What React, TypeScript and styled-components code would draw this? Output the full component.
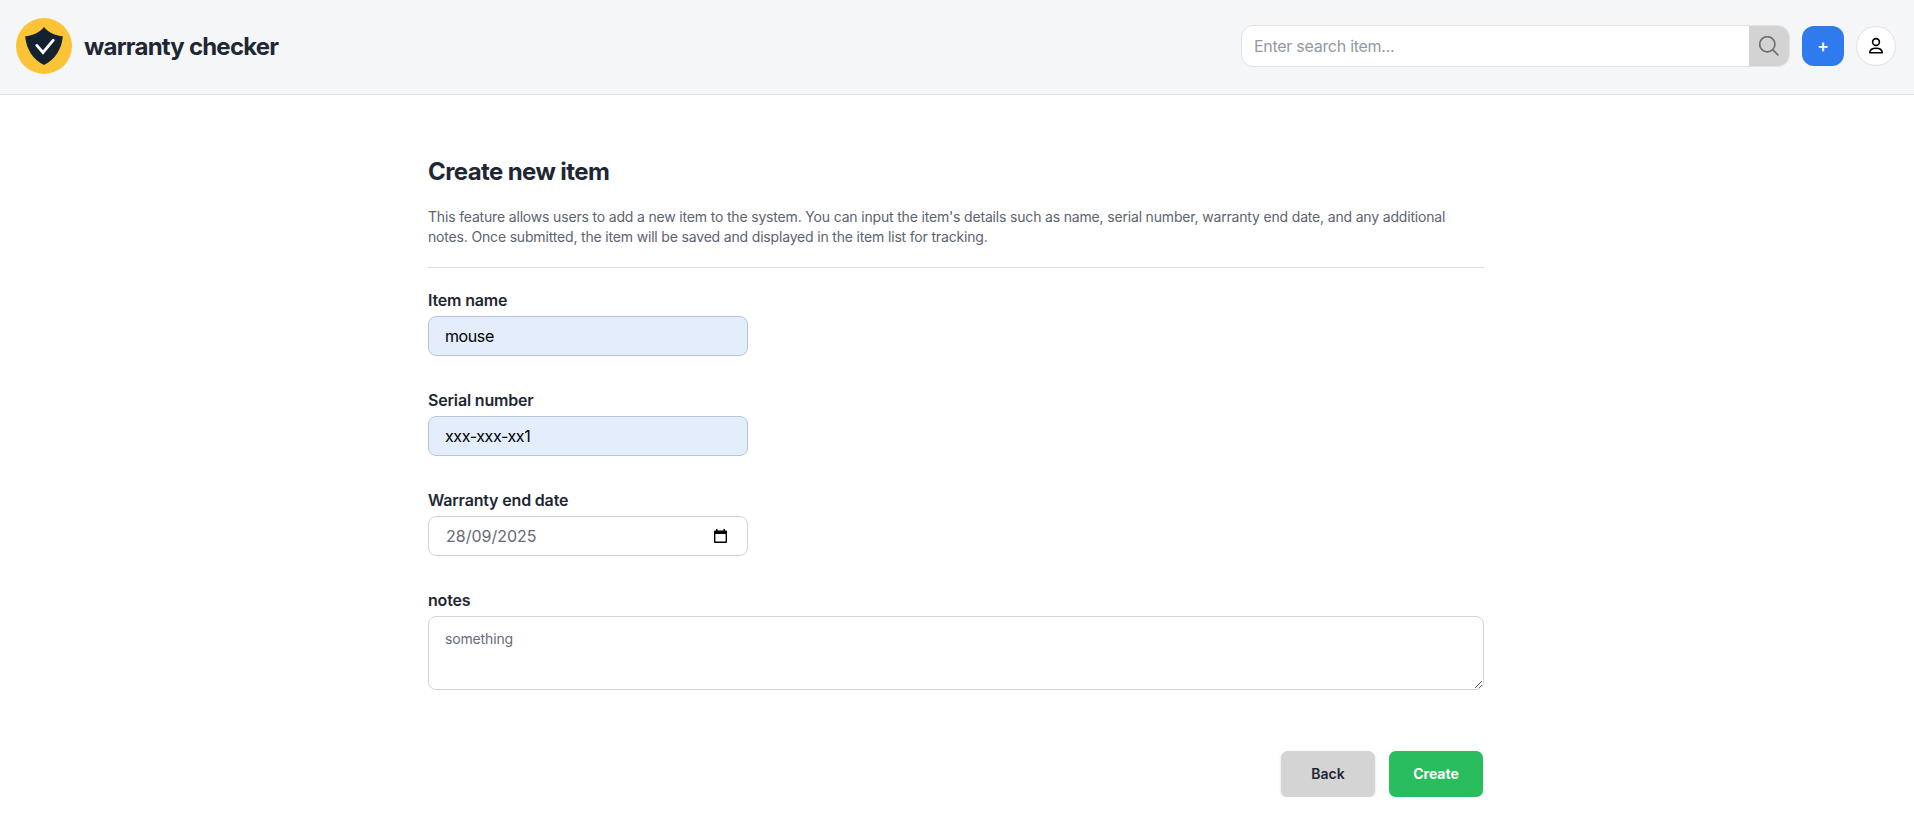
import React from "react";
import styled, { createGlobalStyle } from "styled-components";

const GlobalStyle = createGlobalStyle`
  *, *::before, *::after { box-sizing: border-box; }
  body {
    margin: 0;
    background: #ffffff;
    color: #1f2937;
    font-family: Inter, "Liberation Sans", sans-serif;
    font-size: 16px;
    line-height: 24px;
  }
  button, input, textarea { font: inherit; margin: 0; }
`;

const Header = styled.header`
  display: flex;
  align-items: center;
  justify-content: space-between;
  height: 95px;
  padding: 0 18px 2px 16px;
  background: #f4f6f8;
  border-bottom: 1px solid #dfe3e8;
`;

const Brand = styled.a`
  display: flex;
  align-items: center;
  gap: 12px;
  color: #1f2733;
  text-decoration: none;
`;

const BrandName = styled.span`
  padding-top: 2px;
  font-size: 24px;
  font-weight: 700;
  line-height: 32px;
  letter-spacing: -0.79px;
`;

const Actions = styled.div`
  display: flex;
  align-items: center;
  gap: 12px;
`;

const Search = styled.form`
  display: flex;
  width: 549px;
  height: 42px;
  overflow: hidden;
  background: #ffffff;
  border: 1px solid #dfe3e6;
  border-radius: 12px;
`;

const SearchInput = styled.input`
  flex: 1;
  min-width: 0;
  padding: 0 12px;
  border: 0;
  outline: 0;
  background: transparent;
  letter-spacing: -0.28px;
  &::placeholder { color: #9299a6; opacity: 1; }
`;

const SearchButton = styled.button`
  display: flex;
  align-items: center;
  justify-content: center;
  width: 40px;
  padding: 0;
  border: 0;
  background: #d3d3d3;
`;

const AddButton = styled.button`
  width: 42px;
  height: 40px;
  padding: 0 0 1px;
  border: 0;
  border-radius: 12px;
  background: #2f7bee;
  color: #ffffff;
  font-size: 18px;
  font-weight: 500;
`;

const ProfileButton = styled.button`
  display: flex;
  align-items: center;
  justify-content: center;
  width: 40px;
  height: 40px;
  padding: 0;
  border: 1px solid #dfe1e5;
  border-radius: 50%;
  background: #ffffff;
`;

const Form = styled.main`
  width: 1056px;
  margin: 61px 0 0 428px;
`;

const Title = styled.h1`
  margin: 0;
  color: #1f2733;
  font-size: 24px;
  font-weight: 700;
  line-height: 32px;
  letter-spacing: -0.6px;
`;

const Intro = styled.p`
  margin: 19px 0 0;
  padding-bottom: 20px;
  border-bottom: 1px solid #dcdfe2;
  color: #5d636f;
  font-size: 14px;
  line-height: 20px;
  letter-spacing: -0.172px;
`;

const Field = styled.div<{ $wide?: boolean }>`
  display: flex;
  flex-direction: column;
  width: ${(p) => (p.$wide ? "100%" : "320px")};
  margin-bottom: 32px;
`;

const Fields = styled.div`
  padding-top: 20px;
`;

const Label = styled.label`
  height: 28px;
  color: #1f2733;
  font-weight: 600;
  line-height: 24px;
  letter-spacing: -0.17px;
`;

const Control = styled.div<{ $filled?: boolean }>`
  display: flex;
  align-items: center;
  height: 40px;
  padding: 0 20px 0 16px;
  border: 1px solid ${(p) => (p.$filled ? "#b8c5d8" : "#d1d3d6")};
  border-radius: 8px;
  background: ${(p) => (p.$filled ? "#e3edfc" : "#ffffff")};
`;

const ControlInput = styled.input<{ $date?: boolean }>`
  flex: 1;
  min-width: 0;
  padding: 0 0 0 ${(p) => (p.$date ? "1px" : "0")};
  border: 0;
  outline: 0;
  background: transparent;
  color: ${(p) => (p.$date ? "#666a76" : "#000000")};
  letter-spacing: ${(p) => (p.$date ? "0" : "-0.4px")};
`;

const Notes = styled.textarea`
  display: block;
  height: 74px;
  padding: 12px 16px;
  border: 1px solid #d1d3d6;
  border-radius: 8px;
  outline: 0;
  color: #666c77;
  font-size: 14px;
  line-height: 20px;
  letter-spacing: -0.15px;
  resize: vertical;
`;

const Footer = styled.footer`
  display: flex;
  justify-content: flex-end;
  gap: 14px;
  padding: 29px 1px 0 0;
`;

const FormButton = styled.button<{ $primary?: boolean }>`
  width: 94px;
  height: 46px;
  padding: 0;
  border: 0;
  border-radius: 7px;
  background: ${(p) => (p.$primary ? "#29bd5d" : "#d4d4d4")};
  color: ${(p) => (p.$primary ? "#ffffff" : "#1f2733")};
  box-shadow: 0 1px 3px rgba(0, 0, 0, 0.16);
  font-size: 14px;
  font-weight: ${(p) => (p.$primary ? 700 : 600)};
`;

const ShieldLogo = () => (
  <svg width="56" height="56" viewBox="0 0 56 56">
    <circle cx="28" cy="28" r="28" fill="#fbc437" />
    <path
      d="M28 9C23.4 14.4 17 17.7 9.2 18.2C10.2 31 17 41.6 28 47C39 41.6 45.8 31 46.8 18.2C39 17.7 32.6 14.4 28 9Z"
      fill="#14212e"
    />
    <path d="M20.8 27.4L27 34.5L37.3 22.2" fill="none" stroke="#fff" strokeWidth="2.8" strokeLinecap="round" strokeLinejoin="miter" />
  </svg>
);

const SearchIcon = () => (
  <svg width="20" height="20" viewBox="0 0 20 20" fill="none" stroke="#707070" strokeWidth="1.7">
    <circle cx="8.3" cy="8.3" r="7.6" />
    <path d="M13.7 13.7L19.3 19.3" />
  </svg>
);

const UserIcon = () => (
  <svg width="16" height="18" viewBox="0 0 16 18" fill="none" stroke="#000" strokeWidth="1.6">
    <circle cx="8" cy="5" r="3.4" />
    <path d="M1.8 15.8C1.8 12.8 4.2 11.2 8 11.2S14.2 12.8 14.2 15.8Z" strokeLinejoin="round" />
  </svg>
);

const CalendarIcon = () => (
  <svg width="13" height="15" viewBox="0 0 13 15">
    <path d="M2 0H3.5V1.4H9.5V0H11V1.4H12A1 1 0 0 1 13 2.4V13A1 1 0 0 1 12 14H1A1 1 0 0 1 0 13V2.4A1 1 0 0 1 1 1.4H2ZM1.4 5V12.6H11.6V5Z" fillRule="evenodd" />
  </svg>
);

export default function App() {
  return (
    <>
      <GlobalStyle />
      <Header>
        <Brand>
          <ShieldLogo />
          <BrandName>warranty checker</BrandName>
        </Brand>
        <Actions>
          <Search>
            <SearchInput placeholder="Enter search item..." />
            <SearchButton type="button" aria-label="Search"><SearchIcon /></SearchButton>
          </Search>
          <AddButton>+</AddButton>
          <ProfileButton aria-label="Profile"><UserIcon /></ProfileButton>
        </Actions>
      </Header>
      <Form>
        <Title>Create new item</Title>
        <Intro>
          This feature allows users to add a new item to the system. You can input the item's details such as name,
          serial number, warranty end date, and any additional notes. Once submitted, the item will be saved and
          displayed in the item list for tracking.
        </Intro>
        <Fields>
          <Field>
            <Label htmlFor="name">Item name</Label>
            <Control $filled><ControlInput id="name" defaultValue="mouse" /></Control>
          </Field>
          <Field>
            <Label htmlFor="serial">Serial number</Label>
            <Control $filled><ControlInput id="serial" defaultValue="xxx-xxx-xx1" /></Control>
          </Field>
          <Field>
            <Label htmlFor="date">Warranty end date</Label>
            <Control>
              <ControlInput id="date" $date defaultValue="28/09/2025" />
              <CalendarIcon />
            </Control>
          </Field>
          <Field $wide>
            <Label htmlFor="notes">notes</Label>
            <Notes id="notes" defaultValue="something" />
          </Field>
        </Fields>
        <Footer>
          <FormButton type="button">Back</FormButton>
          <FormButton type="button" $primary>Create</FormButton>
        </Footer>
      </Form>
    </>
  );
}
